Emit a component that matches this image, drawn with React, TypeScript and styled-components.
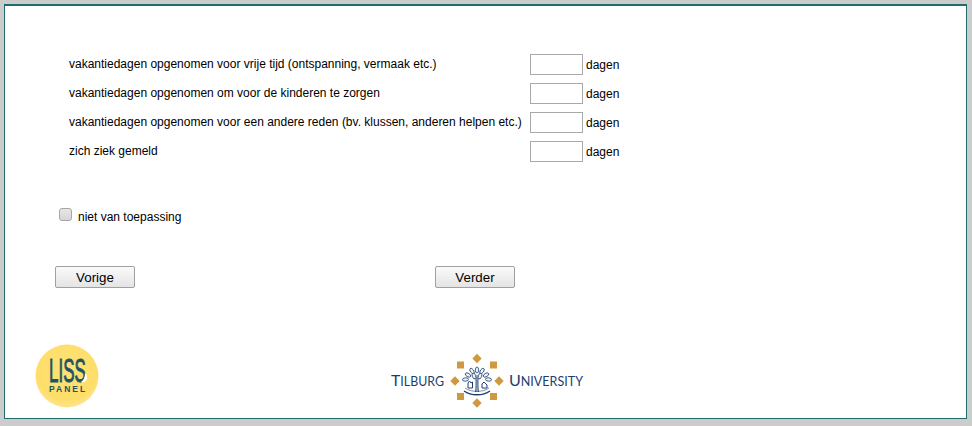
import React from 'react'
import styled, { createGlobalStyle } from 'styled-components'

const GlobalStyle = createGlobalStyle`
  html, body {
    margin: 0;
    padding: 0;
    background: #cccccc;
  }
`

const Page = styled.div`
  box-sizing: border-box;
  width: 972px;
  height: 426px;
  padding: 4px 5px 7px 4px;
  overflow: hidden;
`

const Panel = styled.div`
  box-sizing: border-box;
  height: 100%;
  background: #ffffff;
  border: 1px solid #1f6b6f;
  border-top-width: 2px;
  padding: 48px 0 0 50px;
  display: flex;
  flex-direction: column;
  font-family: 'Liberation Sans', Arial, sans-serif;
  font-size: 12px;
  color: #000000;
`

const Questions = styled.div`
  display: grid;
  grid-template-columns: 461px auto;
  row-gap: 8px;
  margin-left: 14px;
  justify-content: start;
`

const Label = styled.div`
  height: 21px;
  padding-top: 3px;
  box-sizing: border-box;
`

const Answer = styled.div`
  display: flex;
  align-items: center;
  gap: 3px;
`

const DaysInput = styled.input`
  box-sizing: border-box;
  width: 53px;
  height: 21px;
  margin: 0;
  border: 1px solid #a9a9a9;
  background: #ffffff;
`

const NotApplicable = styled.label`
  display: flex;
  align-items: center;
  margin-top: 48px;
  margin-left: 4px;
  gap: 6px;
`

const Box = styled.span`
  box-sizing: border-box;
  width: 13px;
  height: 13px;
  margin-top: -5px;
  border: 1px solid #a6a6a6;
  border-radius: 3px;
  background: linear-gradient(#e6e6e6, #d6d6d6);
`

const Buttons = styled.div`
  display: flex;
  gap: 300px;
  margin-top: 42px;
`

const NavButton = styled.button`
  box-sizing: border-box;
  width: 80px;
  height: 22px;
  margin: 0;
  padding: 0;
  border: 1px solid #a0a0a0;
  border-radius: 2px;
  background: linear-gradient(#fafafa, #e4e4e4);
  font-family: 'Liberation Sans', Arial, sans-serif;
  font-size: 13.33px;
  color: #000000;
`

const Footer = styled.div`
  display: flex;
  margin-top: auto;
  margin-left: -20px;
  margin-bottom: 10px;
`

const LissMark = styled.svg`
  display: block;
  width: 64px;
  height: 64px;
  flex: none;
`

const TilburgMark = styled.svg`
  display: block;
  width: 196px;
  height: 64px;
  margin-left: 291px;
  flex: none;
`

const rows = [
  'vakantiedagen opgenomen voor vrije tijd (ontspanning, vermaak etc.)',
  'vakantiedagen opgenomen om voor de kinderen te zorgen',
  'vakantiedagen opgenomen voor een andere reden (bv. klussen, anderen helpen etc.)',
  'zich ziek gemeld',
]

const diamonds = [
  [87, 14.5],
  [65, 37],
  [109, 37],
  [87, 59],
]
const squares = [
  [70.5, 21],
  [103.5, 21],
  [70.5, 52.5],
  [103.5, 52.5],
]
// leaves round the crown of the tree: x, y, angle
const leaves = [
  [87, 26, 0],
  [82, 27, -35],
  [92, 27, 35],
  [78, 31, -60],
  [96, 31, 60],
  [84, 32, -20],
  [90, 32, 20],
  [75.5, 35.5, -95],
  [98.5, 35.5, 95],
]

function LissLogo() {
  return (
    <LissMark viewBox="0 0 64 64">
      <defs>
        <radialGradient id="liss" cx="0.5" cy="0.4" r="0.6">
          <stop offset="0" stopColor="#ffe27a" />
          <stop offset="0.8" stopColor="#fede68" />
          <stop offset="1" stopColor="#fce58f" />
        </radialGradient>
      </defs>
      <circle cx="32" cy="32" r="31.5" fill="url(#liss)" />
      <text
        transform="translate(14 38) scale(1 2)"
        fontFamily="'Liberation Sans', sans-serif"
        fontSize="17"
        fill="#1f5560"
        stroke="#1f5560"
        strokeWidth="0.5"
      >
        LISS
      </text>
      <path d="M46 38c3 1 6-1 6-5 0-2-1-3-2-4 0 4-1 7-4 9z" fill="#ffffff" />
      <text x="14" y="48" fontFamily="'Liberation Sans', sans-serif" fontSize="8.5" fontWeight="700" letterSpacing="2" fill="#1f5560">
        PANEL
      </text>
    </LissMark>
  )
}

function TilburgLogo() {
  return (
    <TilburgMark viewBox="0 0 196 64">
      <text x="1" y="41.7" fontFamily="Lato, sans-serif" fontSize="16" fill="#1d3f6e" textLength="53" lengthAdjust="spacingAndGlyphs">
        T<tspan fontSize="12.5">ILBURG</tspan>
      </text>
      <text x="119" y="41.7" fontFamily="Lato, sans-serif" fontSize="16" fill="#1d3f6e" textLength="74" lengthAdjust="spacingAndGlyphs">
        U<tspan fontSize="12.5">NIVERSITY</tspan>
      </text>
      {diamonds.map(([x, y]) => (
        <rect key={`${x}-${y}`} x={x - 3.3} y={y - 3.3} width="6.6" height="6.6" fill="#cf9a3f" transform={`rotate(45 ${x} ${y})`} />
      ))}
      {squares.map(([x, y]) => (
        <rect key={`${x}-${y}`} x={x - 3.5} y={y - 3.5} width="7" height="7" fill="#cf9a3f" />
      ))}
      <g fill="#eef2f7" stroke="#1d3f6e" strokeWidth="0.8">
        {leaves.map(([x, y, angle]) => (
          <ellipse key={`${x}-${y}`} cx={x} cy={y} rx="1.7" ry="3" transform={`rotate(${angle} ${x} ${y})`} />
        ))}
      </g>
      <g fill="none" stroke="#1d3f6e">
        <path d="M87 31v17M85.5 48c.6-5 .6-10 .4-14M88.5 48c-.6-5-.6-10-.4-14" strokeWidth="0.8" />
        <path d="M74 47c7 5 19 5 26 0" strokeWidth="1.3" />
        <path d="M75 44c6 4.5 18 4.5 24 0" strokeWidth="0.6" />
        <path d="M78 44v-5l1.5-2 1.5 2 1.5-1v6zM92 44v-4l2-2 3 3v3z" strokeWidth="1" />
      </g>
    </TilburgMark>
  )
}

export default function App() {
  return (
    <Page>
      <GlobalStyle />
      <Panel>
        <Questions>
          {rows.map((text) => (
            <React.Fragment key={text}>
              <Label>{text}</Label>
              <Answer>
                <DaysInput type="text" />
                dagen
              </Answer>
            </React.Fragment>
          ))}
        </Questions>
        <NotApplicable>
          <Box />
          niet van toepassing
        </NotApplicable>
        <Buttons>
          <NavButton>Vorige</NavButton>
          <NavButton>Verder</NavButton>
        </Buttons>
        <Footer>
          <LissLogo />
          <TilburgLogo />
        </Footer>
      </Panel>
    </Page>
  )
}
